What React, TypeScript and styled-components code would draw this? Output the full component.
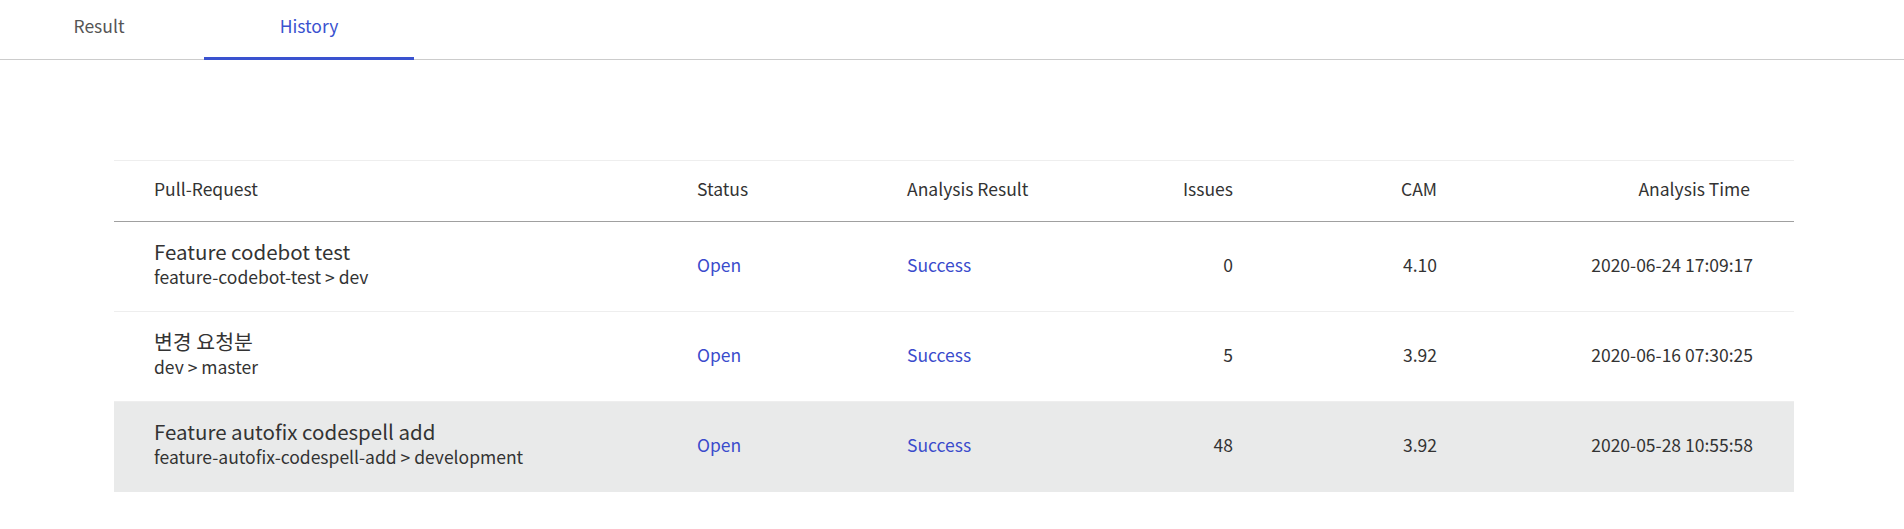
import React from "react";
import styled, { createGlobalStyle } from "styled-components";

const Global = createGlobalStyle`
  html, body { margin: 0; padding: 0; background: #ffffff; }
  body { font-family: "Noto Sans CJK KR", "Noto Sans", sans-serif; color: #333333; }
`;

const Page = styled.div`
  width: 1904px;
  min-height: 529px;
  background: #ffffff;
`;

const TabBar = styled.div`
  display: flex;
  height: 59px;
  border-bottom: 1px solid #cccccc;
`;

const Tab = styled.div<{ $active?: boolean; $width: number }>`
  width: ${(p) => p.$width}px;
  display: flex;
  justify-content: center;
  align-items: center;
  padding-bottom: 6px;
  box-sizing: border-box;
  font-size: 17.5px;
  color: ${(p) => (p.$active ? "#3a52cf" : "#555555")};
  border-bottom: 3px solid ${(p) => (p.$active ? "#3a52cf" : "transparent")};
  margin-bottom: -1px;
  cursor: pointer;
`;

const Content = styled.div`
  padding: 100px 0 0 114px;
`;

const Table = styled.div`
  width: 1680px;
  border-top: 1px solid #eeeeee;
`;

const Row = styled.div<{ $header?: boolean; $highlight?: boolean }>`
  display: grid;
  grid-template-columns: 583px 210px 193px 133px 204px 313px 44px;
  align-items: center;
  height: ${(p) => (p.$header ? 61 : 90)}px;
  padding-bottom: 5px;
  box-sizing: border-box;
  border-bottom: 1px solid ${(p) => (p.$header ? "#a0a0a0" : p.$highlight ? "#e9eaea" : "#eeeeee")};
  background: ${(p) => (p.$highlight ? "#e9eaea" : "transparent")};
  font-size: 17.5px;
  color: #333333;
`;

const Cell = styled.div<{ $align?: "left" | "right"; $first?: boolean; $link?: boolean; $shift?: number }>`
  text-align: ${(p) => p.$align ?? "left"};
  padding-left: ${(p) => (p.$first ? 40 : 0)}px;
  margin-right: ${(p) => -(p.$shift ?? 0)}px;
  color: ${(p) => (p.$link ? "#3a4bcc" : "#333333")};
  white-space: nowrap;
`;

const Title = styled.div`
  font-size: 20.5px;
  line-height: 28px;
  margin-top: -2px;
  color: #333333;
`;

const Sub = styled.div`
  font-size: 17.5px;
  line-height: 24px;
  color: #333333;
`;

const rows = [
  { title: "Feature codebot test", sub: "feature-codebot-test > dev", status: "Open", result: "Success", issues: "0", cam: "4.10", time: "2020-06-24 17:09:17" },
  { title: "변경 요청분", sub: "dev > master", status: "Open", result: "Success", issues: "5", cam: "3.92", time: "2020-06-16 07:30:25" },
  { title: "Feature autofix codespell add", sub: "feature-autofix-codespell-add > development", status: "Open", result: "Success", issues: "48", cam: "3.92", time: "2020-05-28 10:55:58", highlight: true },
];

export default function App() {
  return (
    <Page>
      <Global />
      <TabBar>
        <Tab $width={198}>Result</Tab>
        <Tab $width={6} />
        <Tab $width={210} $active>History</Tab>
      </TabBar>
      <Content>
        <Table>
          <Row $header>
            <Cell $first>Pull-Request</Cell>
            <Cell>Status</Cell>
            <Cell>Analysis Result</Cell>
            <Cell $align="right">Issues</Cell>
            <Cell $align="right">CAM</Cell>
            <Cell $align="right">Analysis Time</Cell>
            <Cell />
          </Row>
          {rows.map((r) => (
            <Row key={r.time} $highlight={r.highlight}>
              <Cell $first>
                <Title>{r.title}</Title>
                <Sub>{r.sub}</Sub>
              </Cell>
              <Cell $link>{r.status}</Cell>
              <Cell $link>{r.result}</Cell>
              <Cell $align="right">{r.issues}</Cell>
              <Cell $align="right">{r.cam}</Cell>
              <Cell $align="right" $shift={3}>{r.time}</Cell>
              <Cell />
            </Row>
          ))}
        </Table>
      </Content>
    </Page>
  );
}
